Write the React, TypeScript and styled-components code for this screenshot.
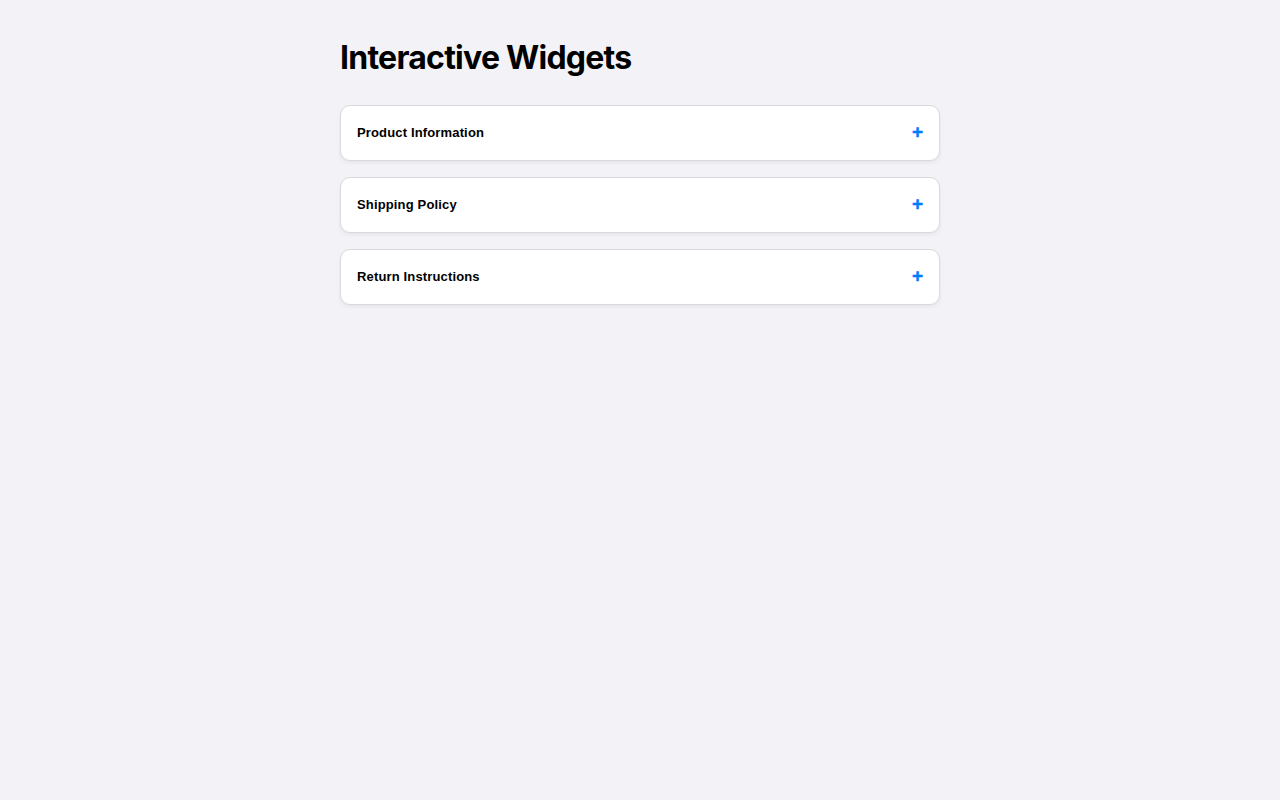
import { FC, useState } from 'react';
import styled, { createGlobalStyle } from 'styled-components';

const GlobalStyle = createGlobalStyle`
	html, body {
		margin: 0;
		padding: 0;
		background: #f2f2f7;
	}
	body {
		font-family: 'Liberation Sans', Arial, sans-serif;
		color: #000;
	}
`;

type Item = {
	title: string;
	body: string;
};

const items: Item[] = [
	{
		title: 'Product Information',
		body: 'Details about materials, sizing and care for this product.',
	},
	{
		title: 'Shipping Policy',
		body: 'Orders ship within 2 business days. Free shipping on orders over $50.',
	},
	{
		title: 'Return Instructions',
		body: 'Returns are accepted within 30 days of delivery in original condition.',
	},
];

const AccordionItem: FC<{ item: Item }> = ({ item }) => {
	const [open, setOpen] = useState(false);

	return (
		<Card>
			<Header onClick={() => setOpen(!open)}>
				<Title>{item.title}</Title>
				<Toggle>{open ? '−' : '+'}</Toggle>
			</Header>
			{open && <Body>{item.body}</Body>}
		</Card>
	);
};

const App: FC = () => {
	return (
		<>
			<GlobalStyle />
			<Page>
				<Heading>Interactive Widgets</Heading>
				<List>
					{items.map((item) => (
						<AccordionItem key={item.title} item={item} />
					))}
				</List>
			</Page>
		</>
	);
};

const Page = styled.div`
	width: 600px;
	margin: 0 auto;
	padding: 38px 0;
`;

const Heading = styled.h1`
	font-family: Inter, 'Noto Sans', sans-serif;
	font-size: 32px;
	font-weight: 700;
	margin: 0 0 28px;
	letter-spacing: -0.75px;
`;

const List = styled.div`
	display: flex;
	flex-direction: column;
	gap: 16px;
`;

const Card = styled.div`
	background: #fff;
	border: 1px solid #d9d9de;
	border-radius: 10px;
	box-shadow: 0 2px 4px rgba(0, 0, 0, 0.06);
	overflow: hidden;
`;

const Header = styled.div`
	display: flex;
	align-items: center;
	justify-content: space-between;
	height: 54px;
	padding: 0 16px 2px;
	box-sizing: border-box;
	cursor: pointer;
`;

const Title = styled.span`
	font-size: 13px;
	font-weight: 700;
	letter-spacing: 0.15px;
`;

const Toggle = styled.span`
	font-size: 19px;
	font-weight: 700;
	color: #007aff;
	line-height: 1;
	margin-top: -2px;
	-webkit-text-stroke: 0.4px #007aff;
`;

const Body = styled.div`
	padding: 0 16px 16px;
	font-size: 13px;
	color: #333;
`;

export default App;
